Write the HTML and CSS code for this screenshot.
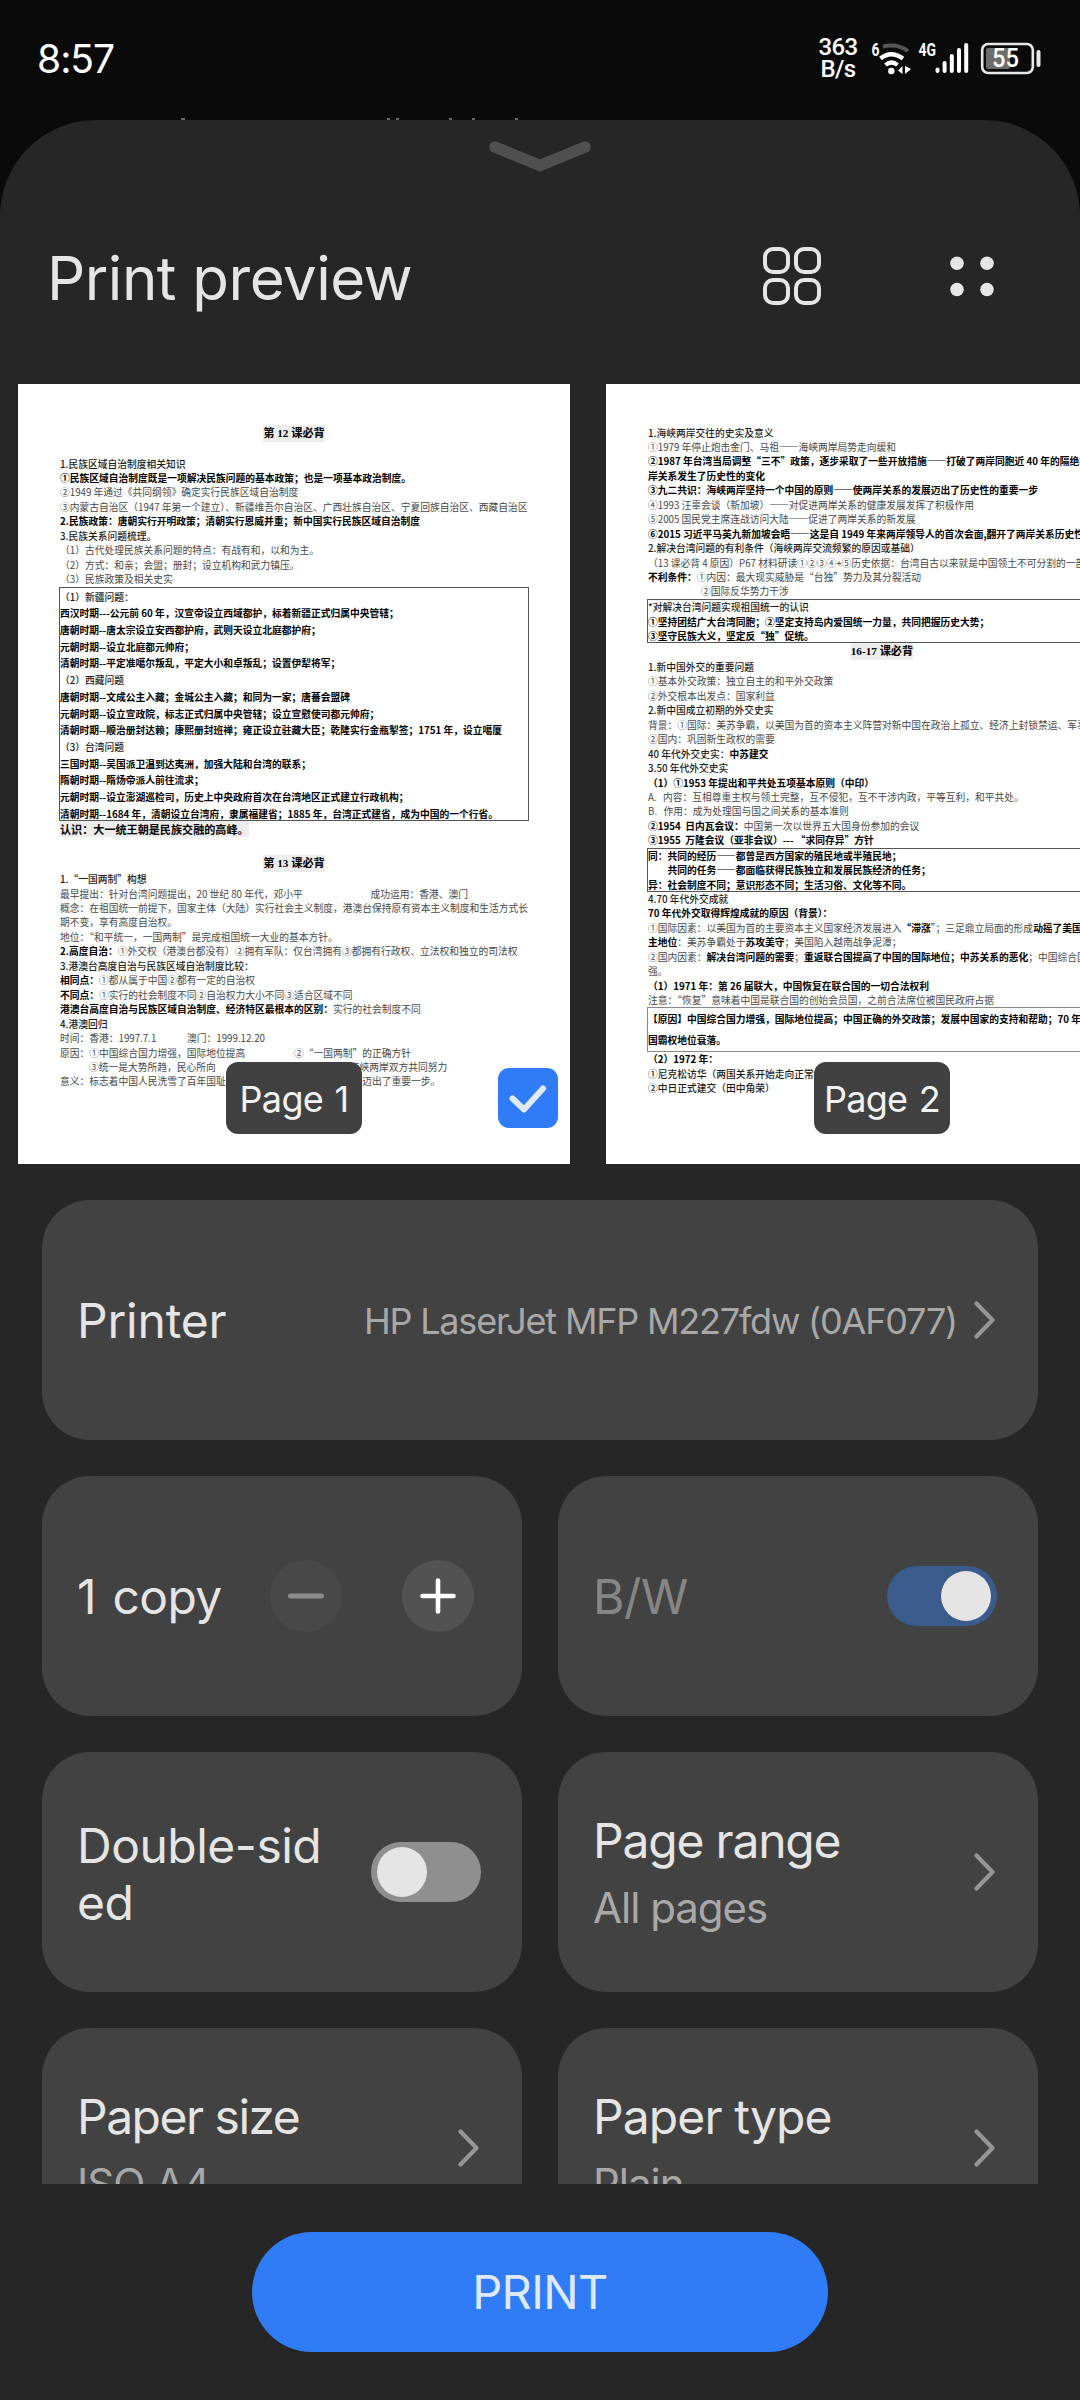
FILE: index.html
```html
<!DOCTYPE html>
<html lang="zh-CN">
<head>
<meta charset="utf-8">
<title>Print preview</title>
<link rel="stylesheet" href="styles.css">
</head>
<body>
<div class="screen">
  <header class="status">
    <span class="clock">8:57</span>
    <div class="status-right">
      <div class="speed"><span>363</span><span>B/s</span></div>
      <svg class="net" width="230" height="50" viewBox="864 34 230 50">
        <text x="871.5" y="56" class="tiny" textLength="8" lengthAdjust="spacingAndGlyphs">6</text>
        <path d="M883 46.5Q897 43 908 51" fill="none" stroke="#555" stroke-width="4"/>
        <path d="M880.5 58.5Q891 50 903 58.5" fill="none" stroke="#fff" stroke-width="4.4"/>
        <path d="M885.500 65Q891.500 60 897.500 65" fill="none" stroke="#fff" stroke-width="4.200"/>
        <circle cx="891.300" cy="71" r="3.200" fill="#fff"/>
        <path d="M902.500 66v8l-4.500-3.500zM905 66v8l6-5z" fill="#fff"/>
        <text x="918.5" y="56" class="tiny" textLength="17.500" lengthAdjust="spacingAndGlyphs">4G</text>
        <path d="M937.500 69.500V71M944.600 63V71M951.800 56V71M959 50V71M966.200 45V71" stroke="#fff" stroke-width="4" stroke-linecap="round"/>
        <rect x="986" y="48" width="24" height="21" rx="2" fill="#6c6c6c"/>
        <rect x="982.200" y="44" width="50.600" height="29" rx="6" fill="none" stroke="#e8e8e8" stroke-width="2.600"/>
        <rect x="1036.500" y="50" width="4" height="17" rx="2" fill="#e8e8e8"/>
        <text x="992" y="67" class="level" textLength="27" lengthAdjust="spacingAndGlyphs">55</text>
      </svg>
    </div>
    <svg class="behind" width="1080" height="3" viewBox="0 0 1080 3">
      <path d="M181 2h4M387 2h3M396 2h3M449 2h3M472 2h3M515 2h3" stroke="#6a6a6a" stroke-width="2"/>
    </svg>
  </header>

  <main class="sheet">
    <div class="handle">
      <svg width="104" height="34" viewBox="0 0 104 34"><path d="M7 8L52 26.500L97 8" fill="none" stroke="#4f4f4f" stroke-width="11.500" stroke-linecap="round"/></svg>
    </div>
    <div class="titlebar">
      <h1>Print preview</h1>
      <svg class="grid-icon" width="60" height="60" viewBox="0 0 60 60" fill="none" stroke="#e6e6e6" stroke-width="4">
        <rect x="3" y="3" width="23" height="23" rx="8"/><rect x="34" y="3" width="23" height="23" rx="8"/>
        <rect x="3" y="34" width="23" height="23" rx="8"/><rect x="34" y="34" width="23" height="23" rx="8"/>
      </svg>
      <svg class="dots-icon" width="60" height="60" viewBox="0 0 60 60" fill="#e6e6e6">
        <circle cx="15" cy="16.200" r="6.800"/><circle cx="45" cy="16.200" r="6.800"/><circle cx="15" cy="42.500" r="6.800"/><circle cx="45" cy="42.500" r="6.800"/>
      </svg>
    </div>

    <section class="pages">
      <article class="page one">
        <div class="heading"><mark>第 12 课必背</mark></div>
        <div class="block gap">
          <p class="m">1.民族区域自治制度相关知识</p>
          <p class="b">①民族区域自治制度既是一项解决民族问题的基本政策；也是一项基本政治制度。</p>
          <p>②1949 年通过《共同纲领》确定实行民族区域自治制度</p>
          <p>③内蒙古自治区（1947 年第一个建立）、新疆维吾尔自治区、广西壮族自治区、宁夏回族自治区、西藏自治区</p>
          <p class="b">2.民族政策：唐朝实行开明政策；清朝实行恩威并重；新中国实行民族区域自治制度</p>
          <p class="m">3.民族关系问题梳理。</p>
          <p>（1）古代处理民族关系问题的特点：有战有和，以和为主。</p>
          <p>（2）方式：和亲；会盟；册封；设立机构和武力镇压。</p>
          <p>（3）民族政策及相关史实</p>
        </div>
        <div class="box tall">
          <p class="m">（1）新疆问题：</p>
          <p class="b">西汉时期---公元前 60 年，汉宣帝设立西域都护，标着新疆正式归属中央管辖；</p>
          <p class="b">唐朝时期--唐太宗设立安西都护府，武则天设立北庭都护府；</p>
          <p class="b">元朝时期--设立北庭都元帅府；</p>
          <p class="b">清朝时期--平定准噶尔叛乱，平定大小和卓叛乱；设置伊犁将军；</p>
          <p class="m">（2）西藏问题</p>
          <p class="b">唐朝时期--文成公主入藏；金城公主入藏；和同为一家；唐蕃会盟碑</p>
          <p class="b">元朝时期--设立宣政院，标志正式归属中央管辖；设立宣慰使司都元帅府；</p>
          <p class="b">清朝时期--顺治册封达赖；康熙册封班禅；雍正设立驻藏大臣；乾隆实行金瓶掣签；1751 年，设立噶厦</p>
          <p class="m">（3）台湾问题</p>
          <p class="b">三国时期--吴国派卫温到达夷洲，加强大陆和台湾的联系；</p>
          <p class="b">隋朝时期--隋炀帝派人前往流求；</p>
          <p class="b">元朝时期--设立澎湖巡检司，历史上中央政府首次在台湾地区正式建立行政机构；</p>
          <p class="b">清朝时期--1684 年，清朝设立台湾府，隶属福建省；1885 年，台湾正式建省，成为中国的一个行省。</p>
        </div>
        <div class="insight"><mark>认识：大一统王朝是民族交融的高峰。</mark></div>
        <div class="heading second"><mark>第 13 课必背</mark></div>
        <div class="block">
          <p class="m">1.“一国两制”构想</p>
          <p class="cols"><span>最早提出：针对台湾问题提出，20 世纪 80 年代，邓小平</span><span class="c-use">成功运用：香港、澳门</span></p>
          <p>概念：在祖国统一前提下，国家主体（大陆）实行社会主义制度，港澳台保持原有资本主义制度和生活方式长</p>
          <p>期不变，享有高度自治权。</p>
          <p>地位：“和平统一，一国两制”是完成祖国统一大业的基本方针。</p>
          <p><b>2.高度自治：</b>①外交权（港澳台都没有）②拥有军队：仅台湾拥有③都拥有行政权、立法权和独立的司法权</p>
          <p class="m">3.港澳台高度自治与民族区域自治制度比较：</p>
          <p><b>相同点：</b>①都从属于中国②都有一定的自治权</p>
          <p><b>不同点：</b>①实行的社会制度不同②自治权力大小不同③适合区域不同</p>
          <p><b>港澳台高度自治与民族区域自治制度、经济特区最根本的区别：</b>实行的社会制度不同</p>
          <p class="m">4.港澳回归</p>
          <p class="cols"><span class="c-hk">时间：香港：1997.7.1</span><span>澳门：1999.12.20</span></p>
          <p class="cols"><span class="c-why">原因：①中国综合国力增强，国际地位提高</span><span>②“一国两制”的正确方针</span></p>
          <p class="cols indent"><span class="c-hearts">③统一是大势所趋，民心所向</span><span>④海峡两岸双方共同努力</span></p>
          <p>意义：标志着中国人民洗雪了百年国耻，中国在完成祖国统一的道路上迈出了重要一步。</p>
        </div>
        <span class="label">Page 1</span>
        <svg class="check" width="60" height="60" viewBox="0 0 60 60"><rect width="60" height="60" rx="11" fill="#307cf6"/><path d="M14.500 30.500L26 41.500L45 20.500" fill="none" stroke="#e0eafa" stroke-width="6" stroke-linecap="round" stroke-linejoin="round"/></svg>
      </article>

      <article class="page two">
        <div class="block">
          <p class="m">1.海峡两岸交往的史实及意义</p>
          <p>①1979 年停止炮击金门、马祖——海峡两岸局势走向缓和</p>
          <p class="b">②1987 年台湾当局调整“三不”政策，逐步采取了一些开放措施——打破了两岸同胞近 40 年的隔绝状态</p>
          <p class="b">岸关系发生了历史性的变化</p>
          <p class="b">③九二共识：海峡两岸坚持一个中国的原则——使两岸关系的发展迈出了历史性的重要一步</p>
          <p>④1993 汪辜会谈（新加坡）——对促进两岸关系的健康发展发挥了积极作用</p>
          <p>⑤2005 国民党主席连战访问大陆——促进了两岸关系的新发展</p>
          <p class="b">⑥2015 习近平马英九新加坡会晤——这是自 1949 年来两岸领导人的首次会面,翻开了两岸关系历史性</p>
          <p class="m">2.解决台湾问题的有利条件（海峡两岸交流频繁的原因或基础）</p>
          <p>（13 课必背 4 原因）P67 材料研读①②③④+⑤历史依据：台湾自古以来就是中国领土不可分割的一部分</p>
          <p><b>不利条件：</b>①内因：最大现实威胁是“台独”势力及其分裂活动</p>
          <p class="indent-wide">②国际反华势力干涉</p>
        </div>
        <div class="box">
          <p class="m">*对解决台湾问题实现祖国统一的认识</p>
          <p class="b">①坚持团结广大台湾同胞；②坚定支持岛内爱国统一力量，共同把握历史大势；</p>
          <p class="b">③坚守民族大义，坚定反“独”促统。</p>
        </div>
        <div class="heading"><mark>16-17 课必背</mark></div>
        <div class="block">
          <p class="m">1.新中国外交的重要问题</p>
          <p>①基本外交政策：独立自主的和平外交政策</p>
          <p>②外交根本出发点：国家利益</p>
          <p class="m">2.新中国成立初期的外交史实</p>
          <p>背景：①国际：美苏争霸，以美国为首的资本主义阵营对新中国在政治上孤立、经济上封锁禁运、军事上</p>
          <p>②国内：巩固新生政权的需要</p>
          <p class="m">40 年代外交史实：<b>中苏建交</b></p>
          <p class="m">3.50 年代外交史实</p>
          <p class="b">（1）①1953 年提出和平共处五项基本原则（中印）</p>
          <p class="spaced">A.&nbsp; 内容：互相尊重主权与领土完整，互不侵犯，互不干涉内政，平等互利，和平共处。</p>
          <p class="spaced">B.&nbsp; 作用：成为处理国与国之间关系的基本准则</p>
          <p><b>②1954&nbsp; 日内瓦会议：</b>中国第一次以世界五大国身份参加的会议</p>
          <p class="b">③1955&nbsp; 万隆会议（亚非会议）--- “求同存异”方针</p>
        </div>
        <div class="box">
          <p class="b">同：共同的经历——都曾是西方国家的殖民地或半殖民地；</p>
          <p class="b indent-two">共同的任务——都面临获得民族独立和发展民族经济的任务；</p>
          <p class="b">异：社会制度不同；意识形态不同；生活习俗、文化等不同。</p>
        </div>
        <div class="block">
          <p class="m">4.70 年代外交成就</p>
          <p class="b">70 年代外交取得辉煌成就的原因（背景）：</p>
          <p>①国际因素：以美国为首的主要资本主义国家经济发展进入<b>“滞涨</b>”；三足鼎立局面的形成<b>动摇了美国的霸</b></p>
          <p><b>主地位</b>：美苏争霸处于<b>苏攻美守</b>；美国陷入越南战争泥潭；</p>
          <p>②国内因素：<b>解决台湾问题的需要</b>；<b>重返联合国提高了中国的国际地位；中苏关系的恶化</b>；中国综合国力</p>
          <p>强。</p>
          <p class="b">（1）1971 年：第 26 届联大，中国恢复在联合国的一切合法权利</p>
          <p>注意：“恢复”意味着中国是联合国的创始会员国，之前合法席位被国民政府占据</p>
        </div>
        <div class="box loose">
          <p class="b">【原因】中国综合国力增强，国际地位提高；中国正确的外交政策；发展中国家的支持和帮助；70 年代美</p>
          <p class="b">国霸权地位衰落。</p>
        </div>
        <div class="block">
          <p class="b">（2）1972 年：</p>
          <p class="m">①尼克松访华（两国关系开始走向正常化）</p>
          <p class="m">②中日正式建交（田中角荣）</p>
        </div>
        <span class="label">Page 2</span>
      </article>
    </section>

    <section class="options">
      <div class="card full">
        <span class="name printer">Printer</span>
        <span class="value">HP LaserJet MFP M227fdw (0AF077)</span>
        <svg class="chev" width="24" height="40" viewBox="0 0 24 40"><path d="M3.500 3.500L19.500 20L3.500 36.500"/></svg>
      </div>
      <div class="card">
        <span class="name copies">1 copy</span>
        <svg class="step minus" width="72" height="72" viewBox="0 0 72 72"><circle cx="36" cy="36" r="36" fill="#484848"/><path d="M20.500 36H51.500" stroke="#8c8c8c" stroke-width="5" stroke-linecap="round"/></svg>
        <svg class="step" width="72" height="72" viewBox="0 0 72 72"><circle cx="36" cy="36" r="36" fill="#525252"/><path d="M20.500 36H51.500M36 20.500V51.500" stroke="#fff" stroke-width="4.600" stroke-linecap="round"/></svg>
      </div>
      <div class="card">
        <span class="name off">B/W</span>
        <span class="toggle on"><i></i></span>
      </div>
      <div class="card">
        <span class="name double">Double-sid<br>ed</span>
        <span class="toggle"><i></i></span>
      </div>
      <div class="card">
        <div class="stack"><span class="name range">Page range</span><span class="sub">All pages</span></div>
        <svg class="chev" width="24" height="40" viewBox="0 0 24 40"><path d="M3.500 3.500L19.500 20L3.500 36.500"/></svg>
      </div>
      <div class="card">
        <div class="stack"><span class="name size">Paper size</span><span class="sub">ISO A4</span></div>
        <svg class="chev" width="24" height="40" viewBox="0 0 24 40"><path d="M3.500 3.500L19.500 20L3.500 36.500"/></svg>
      </div>
      <div class="card">
        <div class="stack"><span class="name type">Paper type</span><span class="sub">Plain</span></div>
        <svg class="chev" width="24" height="40" viewBox="0 0 24 40"><path d="M3.500 3.500L19.500 20L3.500 36.500"/></svg>
      </div>
    </section>

    <footer class="actions"><button class="print">PRINT</button></footer>
  </main>
</div>
</body>
</html>
```
FILE: styles.css
```css
* { box-sizing: border-box; }
body { margin: 0; background: #0a0a0a; }
svg { display: block; flex: none; }

.screen {
  width: 1080px;
  height: 2400px;
  overflow: hidden;
  background: #0a0a0a;
  font-family: Inter, "Noto Sans", sans-serif;
  color: #e5e5e5;
}

/* status bar */
.status {
  position: relative;
  height: 120px;
  display: flex;
  justify-content: space-between;
  padding-left: 37px;
}
.clock { margin-top: 34px; font-size: 39px; line-height: 50px; color: #fff; letter-spacing: -1px; }
.status-right { display: flex; margin-top: 34px; width: 262px; }
.speed {
  display: flex;
  flex-direction: column;
  flex: none;
  width: 46px;
  padding-top: 3px;
  font: 500 24px/21.5px Roboto, sans-serif;
  letter-spacing: -0.7px;
  color: #fff;
  text-align: center;
  margin-left: -3px;
}
.net { margin-left: 3px; }
.tiny { font: 700 18px Roboto, sans-serif; fill: #fff; }
.level { font: 500 25px Roboto, sans-serif; fill: #fff; }
.behind { position: absolute; left: 0; bottom: 0; }

/* sheet */
.sheet { height: 2280px; background: #262626; border-radius: 96px 96px 0 0; }
.handle { height: 67px; padding-top: 19px; display: flex; justify-content: center; }
.titlebar { display: flex; align-items: center; height: 180px; padding: 0 78px 0 47px; }
.titlebar h1 {
  flex: 1;
  margin: 2px 0 0;
  font-size: 60px;
  font-weight: 400;
  line-height: 72px;
  letter-spacing: -0.5px;
}
.grid-icon { margin: -2px 120px 0 0; }

/* page previews */
.pages { display: flex; gap: 36px; height: 780px; margin: 17px 0 36px; padding-left: 18px; overflow: hidden; }
.page {
  position: relative;
  flex: none;
  width: 552px;
  height: 780px;
  background: #fff;
  color: #000;
  font: 9.76px/14.46px "Noto Sans CJK SC", sans-serif;
}
.page.one { padding: 41px 41px 0; }
.page.two { padding: 41.5px 41px 0; }
.page p { margin: 0; white-space: pre; color: #484848; padding-left: 1px; }
.page p.m { color: #1c1c1c; font-weight: 500; }
.page p.b, .page b { color: #000; font-weight: 700; }
.heading { height: 17px; display: flex; justify-content: center; font: 700 11.2px/17px "Liberation Serif", "Noto Sans CJK SC", serif; }
.page mark { background: #ededed; color: #000; white-space: pre; }
.heading.second { margin-top: 17px; }
.gap { margin-top: 14.5px; }
.box { border: 1px solid #555; padding-top: 0.5px; line-height: 14.15px; height: 44px; }
.page .box p { padding-left: 0; }
.box.tall { height: 234.5px; line-height: 16.7px; padding-top: 1px; overflow: hidden; }
.box.loose { height: 45px; line-height: 21.3px; border-color: #888; }
.insight { height: 17px; padding-left: 1px; font: 700 11.1px/17px "Noto Sans CJK SC", sans-serif; }
.cols { display: flex; }
.c-use { margin-left: auto; margin-right: 61px; }
.c-hk { width: 127px; }
.c-why { width: 234px; }
.page .indent { padding-left: 30px; }
.c-hearts { flex: none; width: 251px; }
.page .indent-wide { padding-left: 54px; }
.page .box .indent-two { padding-left: 19.5px; }
.spaced { word-spacing: 1px; }
.label {
  position: absolute;
  left: 208px;
  bottom: 30px;
  width: 136px;
  height: 72px;
  border-radius: 12px;
  background: #414141;
  color: #f2f2f2;
  font: 400 36px/74px Inter, sans-serif;
  letter-spacing: -0.7px;
  word-spacing: 2px;
  text-align: center;
}
.check { position: absolute; left: 480px; bottom: 36px; }

/* options */
.options {
  display: grid;
  grid-template-columns: 480px 480px;
  grid-auto-rows: 240px;
  gap: 36px;
  height: 984px;
  overflow: hidden;
  padding: 0 42px;
}
.card {
  display: flex;
  align-items: center;
  justify-content: space-between;
  padding: 0 41px 0 35px;
  border-radius: 48px;
  background: #424242;
  white-space: nowrap;
}
.full { grid-column: 1 / 3; }
.name { padding-top: 1px; font-size: 48px; line-height: 57px; letter-spacing: -0.7px; }
.printer { letter-spacing: -0.2px; }
.off { color: #868686; letter-spacing: -0.3px; }
.double { letter-spacing: -0.5px; padding-top: 3px; }
.range { letter-spacing: -1.2px; }
.size { letter-spacing: -1.5px; }
.type { letter-spacing: -0.9px; }
.value { margin-left: auto; margin-right: 16px; padding-top: 2px; font-size: 36px; line-height: 48px; letter-spacing: -1.2px; color: #a8a8a8; }
.chev path { fill: none; stroke: #969696; stroke-width: 4.2; stroke-linecap: round; stroke-linejoin: round; }
.copies { flex: 1; word-spacing: 4px; }
.step { margin-right: 7px; }
.minus { margin-right: 60px; }
.stack { display: flex; flex-direction: column; padding-top: 3px; }
.sub { margin-top: 11px; font-size: 42px; line-height: 56px; color: #a8a8a8; letter-spacing: -1px; }
.toggle { display: flex; width: 110px; height: 60px; padding: 5px 6px; border-radius: 30px; background: #8f8f8f; }
.toggle i { width: 50px; height: 50px; border-radius: 50%; background: #e5e5e5; }
.toggle.on { justify-content: flex-end; background: #3c5b8d; }

.actions { display: flex; justify-content: center; padding-top: 48px; }
.print {
  width: 576px;
  height: 120px;
  padding: 0;
  border: 0;
  border-radius: 60px;
  background: #307cf6;
  color: #dfe9fb;
  font: 400 47px/120px Inter, sans-serif;
  letter-spacing: -0.6px;
}
```
